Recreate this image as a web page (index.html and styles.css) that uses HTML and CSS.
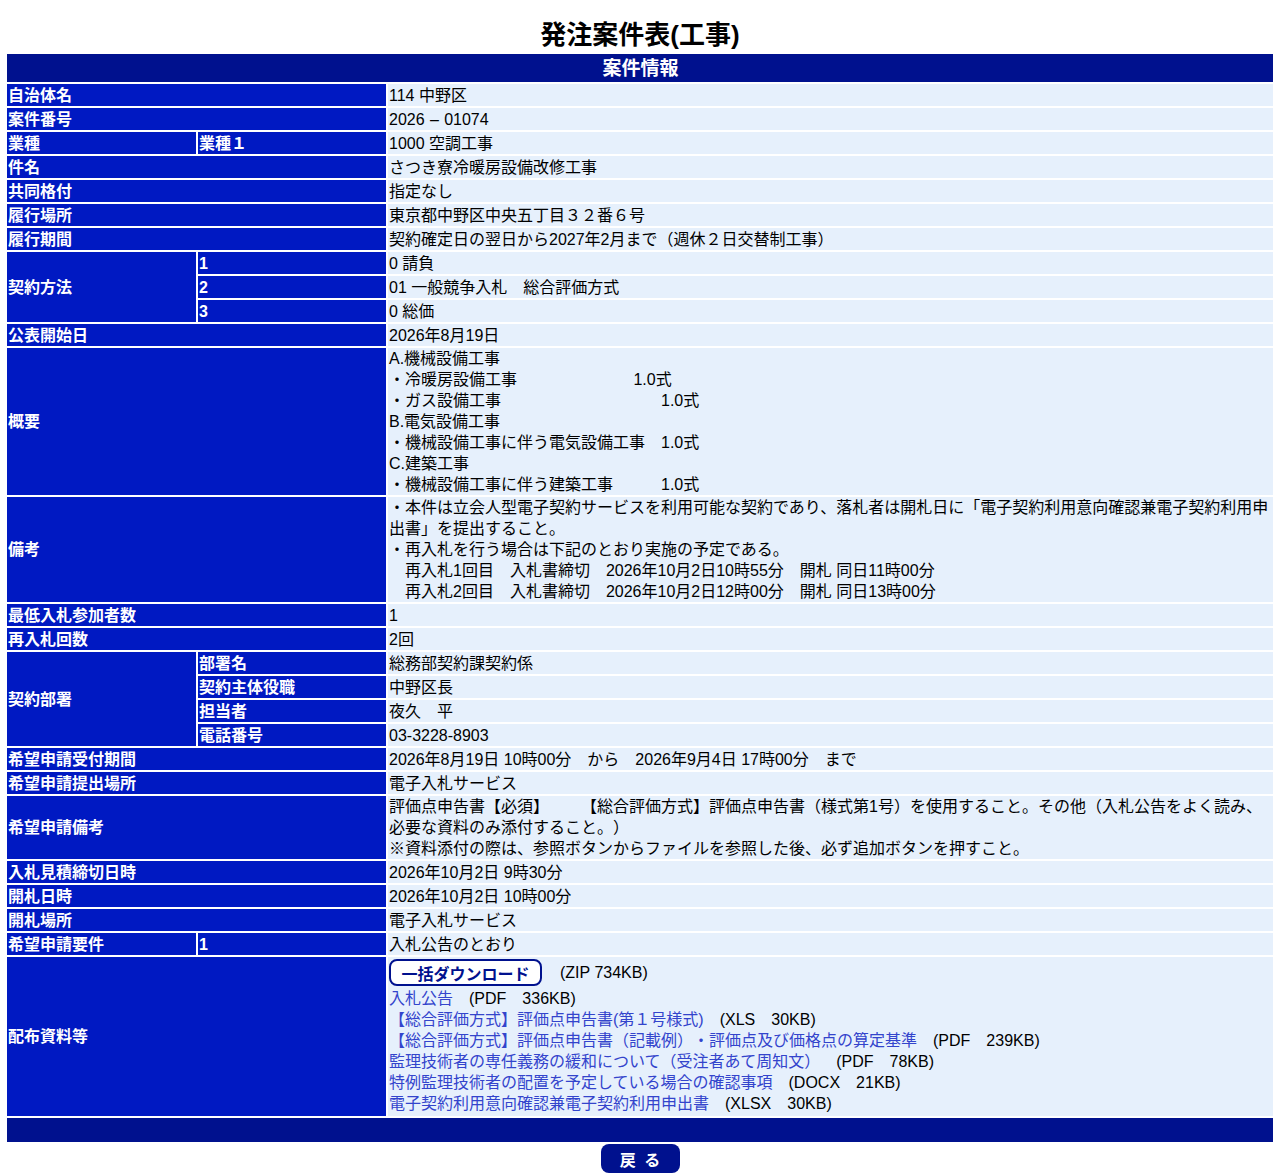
FILE: index.html
```html
<!DOCTYPE html>
<html lang="ja">
<head>
<meta charset="utf-8">
<title>発注案件表(工事)</title>
<link rel="stylesheet" href="styles.css">
</head>
<body>
<h1 class="title">発注案件表(工事)</h1>
<table class="info">
  <colgroup><col class="c1"><col class="c2"><col class="c3"></colgroup>
  <tr><th class="head" colspan="3">案件情報</th></tr>
  <tr><td class="lbl" colspan="2">自治体名</td><td class="val">114 中野区</td></tr>
  <tr><td class="lbl" colspan="2">案件番号</td><td class="val">2026&#8196;–&#8196;01074</td></tr>
  <tr><td class="lbl">業種</td><td class="lbl">業種１</td><td class="val">1000 空調工事</td></tr>
  <tr><td class="lbl" colspan="2">件名</td><td class="val">さつき寮冷暖房設備改修工事</td></tr>
  <tr><td class="lbl" colspan="2">共同格付</td><td class="val">指定なし</td></tr>
  <tr><td class="lbl" colspan="2">履行場所</td><td class="val">東京都中野区中央五丁目３２番６号</td></tr>
  <tr><td class="lbl" colspan="2">履行期間</td><td class="val">契約確定日の翌日から2027年2月まで（週休２日交替制工事）</td></tr>
  <tr><td class="lbl" rowspan="3">契約方法</td><td class="lbl">1</td><td class="val">0 請負</td></tr>
  <tr><td class="lbl">2</td><td class="val">01 一般競争入札　総合評価方式</td></tr>
  <tr><td class="lbl">3</td><td class="val">0 総価</td></tr>
  <tr><td class="lbl" colspan="2">公表開始日</td><td class="val">2026年8月19日</td></tr>
  <tr><td class="lbl" colspan="2">概要</td><td class="val pre">A.機械設備工事
・冷暖房設備工事　　　　　　　 1.0式
・ガス設備工事　　　　　　　　　　1.0式
B.電気設備工事
・機械設備工事に伴う電気設備工事　1.0式
C.建築工事
・機械設備工事に伴う建築工事　　　1.0式</td></tr>
  <tr><td class="lbl" colspan="2">備考</td><td class="val">・本件は立会人型電子契約サービスを利用可能な契約であり、落札者は開札日に「電子契約利用意向確認兼電子契約利用申出書」を提出すること。<br>・再入札を行う場合は下記のとおり実施の予定である。<br>　再入札1回目　入札書締切　2026年10月2日10時55分　開札 同日11時00分<br>　再入札2回目　入札書締切　2026年10月2日12時00分　開札 同日13時00分</td></tr>
  <tr><td class="lbl" colspan="2">最低入札参加者数</td><td class="val">1</td></tr>
  <tr><td class="lbl" colspan="2">再入札回数</td><td class="val">2回</td></tr>
  <tr><td class="lbl" rowspan="4">契約部署</td><td class="lbl">部署名</td><td class="val">総務部契約課契約係</td></tr>
  <tr><td class="lbl">契約主体役職</td><td class="val">中野区長</td></tr>
  <tr><td class="lbl">担当者</td><td class="val">夜久　平</td></tr>
  <tr><td class="lbl">電話番号</td><td class="val">03-3228-8903</td></tr>
  <tr><td class="lbl" colspan="2">希望申請受付期間</td><td class="val">2026年8月19日 10時00分　から　2026年9月4日 17時00分　まで</td></tr>
  <tr><td class="lbl" colspan="2">希望申請提出場所</td><td class="val">電子入札サービス</td></tr>
  <tr><td class="lbl" colspan="2">希望申請備考</td><td class="val">評価点申告書【必須】　　【総合評価方式】評価点申告書（様式第1号）を使用すること。その他（入札公告をよく読み、必要な資料のみ添付すること。）<br>※資料添付の際は、参照ボタンからファイルを参照した後、必ず追加ボタンを押すこと。</td></tr>
  <tr><td class="lbl" colspan="2">入札見積締切日時</td><td class="val">2026年10月2日 9時30分</td></tr>
  <tr><td class="lbl" colspan="2">開札日時</td><td class="val">2026年10月2日 10時00分</td></tr>
  <tr><td class="lbl" colspan="2">開札場所</td><td class="val">電子入札サービス</td></tr>
  <tr><td class="lbl">希望申請要件</td><td class="lbl">1</td><td class="val">入札公告のとおり</td></tr>
  <tr><td class="lbl" colspan="2">配布資料等</td><td class="val docs">
    <div class="dlrow"><button class="dlbtn" type="button">一括ダウンロード</button><span class="dlsize">(ZIP 734KB)</span></div>
    <div><a href="#" class="doc">入札公告</a>　(PDF　336KB)</div>
    <div><a href="#" class="doc">【総合評価方式】評価点申告書(第１号様式)</a>　(XLS　30KB)</div>
    <div><a href="#" class="doc">【総合評価方式】評価点申告書（記載例）・評価点及び価格点の算定基準</a>　(PDF　239KB)</div>
    <div><a href="#" class="doc">監理技術者の専任義務の緩和について（受注者あて周知文）</a>　(PDF　78KB)</div>
    <div><a href="#" class="doc">特例監理技術者の配置を予定している場合の確認事項</a>　(DOCX　21KB)</div>
    <div><a href="#" class="doc">電子契約利用意向確認兼電子契約利用申出書</a>　(XLSX　30KB)</div>
  </td></tr>
  <tr><td class="foot" colspan="3"></td></tr>
</table>
<div class="actions"><button class="back" type="button">戻 る</button></div>
</body>
</html>
```

FILE: styles.css
```css
body {
  margin: 0;
  background: #ffffff;
  font-family: "Liberation Sans", "Noto Sans CJK JP", sans-serif;
  font-size: 16px;
  color: #000;
  text-spacing-trim: space-all;
}
.title {
  margin: 0;
  padding-top: 20px;
  height: 32px;
  line-height: 30px;
  font-size: 26px;
  font-weight: bold;
  text-align: center;
}
.info {
  margin-left: 5px;
  width: 1270px;
  border-spacing: 2px;
  table-layout: fixed;
  line-height: 21px;
}
.c1 { width: 189px; }
.c2 { width: 188px; }
.c3 { width: 885px; }
.info td, .info th {
  padding: 0 0 0 1px;
  height: 22px;
  box-sizing: border-box;
}
.head {
  background: #00118e;
  color: #fff;
  font-size: 19px;
  font-weight: bold;
  text-align: center;
  vertical-align: middle;
}
.info th.head { height: 28px; }
.lbl {
  background: #0019c2;
  color: #fff;
  font-weight: bold;
  vertical-align: middle;
  white-space: nowrap;
}
.val {
  background: #e6f0fc;
  vertical-align: middle;
}
.pre { white-space: pre; }
.info td.docs { padding-bottom: 2px; }
.foot {
  background: #00118e;
}
.info td.foot { height: 24px; }
.dlrow {
  height: 31px;
  display: flex;
  align-items: center;
}
.dlbtn {
  height: 27px;
  width: 153px;
  padding: 0;
  border: 2px solid #00118e;
  border-radius: 8px;
  background: #fff;
  color: #00118e;
  font-family: "Liberation Sans", "Noto Sans CJK JP", sans-serif;
  font-size: 16px;
  font-weight: bold;
}
.dlsize { margin-left: 18px; }
.doc {
  color: #3344cc;
  text-decoration: none;
}
.actions {
  display: flex;
  justify-content: center;
}
.back {
  width: 79px;
  height: 29px;
  border: none;
  border-radius: 8px;
  background: #00118e;
  color: #fff;
  font-family: "Liberation Sans", "Noto Sans CJK JP", sans-serif;
  font-size: 16px;
  font-weight: bold;
  letter-spacing: 2px;
  padding: 0 0 0 2px;
}
```
